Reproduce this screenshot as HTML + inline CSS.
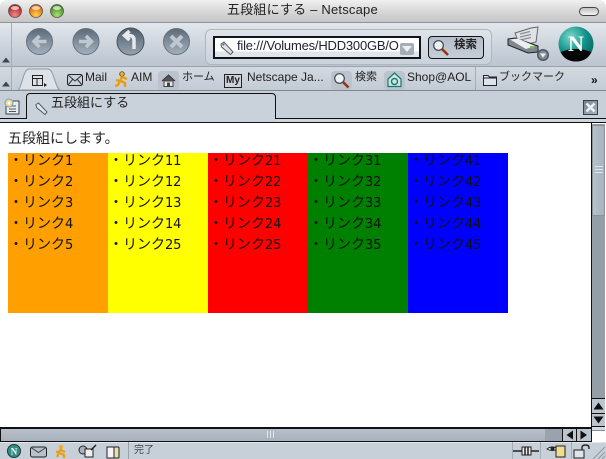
<!DOCTYPE html>
<html><head><meta charset="utf-8"><style>
html,body{margin:0;padding:0;background:#fff}
#w{position:relative;width:606px;height:459px;overflow:hidden;background:#fff;font-family:"Liberation Sans","Noto Sans CJK JP",sans-serif;color:#000}
.a{position:absolute}
.t{position:absolute;white-space:nowrap;line-height:1}
.col{position:absolute;top:153px;width:100px;height:160px;overflow:hidden}
.col div{position:absolute;left:1px;white-space:nowrap;font-family:"Noto Sans CJK JP",sans-serif;font-size:14px;line-height:21px;height:21px;color:#111}
.col b{font-family:"DejaVu Sans",sans-serif;font-weight:normal;font-size:13px;letter-spacing:-.2px}
.tb{font-size:12px;color:#222}
.j{font-size:11px;font-family:"Noto Sans CJK JP",sans-serif}
svg{position:absolute;overflow:visible}
</style></head><body><div id="w">
<!-- title bar -->
<div class="a" style="left:0;top:0;width:606px;height:23px;background:linear-gradient(#f0f0f0,#d8d8d8 50%,#c6c6c6);border-radius:7px 7px 0 0;border-bottom:1px solid #8f959c;box-sizing:border-box"></div>
<svg style="left:0;top:0" width="70" height="22">
<defs>
<radialGradient id="r" cx=".5" cy=".8" r=".7"><stop offset="0" stop-color="#f08a88"/><stop offset="1" stop-color="#b4201e"/></radialGradient>
<radialGradient id="o" cx=".5" cy=".8" r=".7"><stop offset="0" stop-color="#ffd24a"/><stop offset="1" stop-color="#d8620a"/></radialGradient>
<radialGradient id="g" cx=".5" cy=".8" r=".7"><stop offset="0" stop-color="#a8e070"/><stop offset="1" stop-color="#3c8a1c"/></radialGradient>
</defs>
<circle cx="15" cy="11" r="6.500" fill="url(#r)" stroke="#555" stroke-width=".8"/><ellipse cx="15" cy="8" rx="4" ry="2" fill="#fff" opacity=".65"/>
<circle cx="36" cy="11" r="6.500" fill="url(#o)" stroke="#555" stroke-width=".8"/><ellipse cx="36" cy="8" rx="4" ry="2" fill="#fff" opacity=".65"/>
<circle cx="57" cy="11" r="6.500" fill="url(#g)" stroke="#555" stroke-width=".8"/><ellipse cx="57" cy="8" rx="4" ry="2" fill="#fff" opacity=".65"/>
</svg>
<div class="t" style="left:227px;top:3px;font-size:13px;color:#222;letter-spacing:.2px">五段組にする – Netscape</div>
<div class="a" style="left:579px;top:7px;width:18px;height:7px;border:1px solid #444;border-radius:5px;background:linear-gradient(#c0c0c0,#f4f4f4)"></div>

<!-- nav toolbar -->
<div class="a" style="left:0;top:23px;width:606px;height:44px;background:linear-gradient(#e3e7ec,#c9d1da 60%,#bcc5d0);border-bottom:1px solid #9aa3ad;box-sizing:border-box"></div>
<div class="a" style="left:0;top:23px;width:12px;height:44px;border-right:1px solid #a5adb7;box-sizing:border-box"></div>
<svg style="left:2px;top:57px" width="9" height="6"><path d="M0 5.500L4 .5L8 5.500Z" fill="#3c4650"/></svg>
<svg style="left:0;top:22px" width="210" height="45">
<defs><linearGradient id="b" x1="0" y1="0" x2="0" y2="1"><stop offset="0" stop-color="#5c6a78"/><stop offset="1" stop-color="#a5b1bd"/></linearGradient>
<linearGradient id="b2" x1="0" y1="0" x2="0" y2="1"><stop offset="0" stop-color="#4f5c69"/><stop offset="1" stop-color="#97a3b0"/></linearGradient></defs>
<g stroke="#66727e" stroke-width="1">
<circle cx="39.500" cy="19.500" r="13" fill="url(#b)"/><circle cx="86" cy="19.500" r="13" fill="url(#b)"/><circle cx="130.500" cy="19.500" r="13.500" fill="url(#b2)" stroke="#48535e"/><circle cx="176.500" cy="19.500" r="13" fill="url(#b)"/></g>
<path d="M46.500 19.500H34.500M39.500 14L34 19.500L39.500 25" fill="none" stroke="#bfc8d1" stroke-width="3.500"/>
<path d="M79 19.500H91M86 14L91.500 19.500L86 25" fill="none" stroke="#bfc8d1" stroke-width="3.500"/>
<path d="M134 27V18Q134 13.500 129 13.500H126M129.500 9L124.500 13.500L129.500 18" fill="none" stroke="#e6eaef" stroke-width="3.500"/>
<path d="M171 14L182 25M182 14L171 25" fill="none" stroke="#bfc8d1" stroke-width="4"/>
</svg>
<!-- URL group -->
<div class="a" style="left:205px;top:29px;width:287px;height:36px;border:1px solid #aeb7c1;border-radius:6px;box-sizing:border-box;background:linear-gradient(#dfe4e9,#c9d1da)"></div>
<div class="a" style="left:213px;top:36px;width:208px;height:23px;border:2px solid #10151b;box-sizing:border-box;background:linear-gradient(#fff 70%,#dfe5ea 70%)"></div>
<svg style="left:219px;top:41px" width="16" height="14"><path d="M2 3L5 1L14 11L11.500 13.500L2.500 6Z" fill="#dfe4ea" stroke="#4f5963"/><circle cx="4.500" cy="3.500" r="1" fill="#4f5963"/></svg>
<div class="t" style="left:237px;top:39px;font-size:13px;color:#223;letter-spacing:-.2px;width:163px;overflow:hidden">file:///Volumes/HDD300GB/O</div>
<div class="a" style="left:400px;top:43px;width:14px;height:12px;background:#a4adb8;border-radius:2px"></div>
<svg style="left:402px;top:46px" width="10" height="6"><path d="M0 0H10L5 6Z" fill="#eef1f4"/></svg>
<div class="a" style="left:428px;top:36px;width:56px;height:23px;border:1px solid #10151b;border-radius:4px;box-sizing:border-box;background:linear-gradient(#b4bdc8,#c6ced8)"></div>
<svg style="left:432px;top:39px" width="18" height="18"><circle cx="6.500" cy="6.500" r="4.800" fill="#eef2f5" stroke="#3c4650" stroke-width="1.200"/><path d="M10 10L16 16" stroke="#9a3312" stroke-width="2.600"/></svg>
<div class="t" style="left:454px;top:40px;font-size:11.500px;font-weight:bold;color:#222">検索</div>
<!-- printer -->
<svg style="left:505px;top:25px" width="46" height="36">
<path d="M10 8L26 3L33 2L31 17L15 21Z" fill="#dfe2e6" stroke="#666"/>
<path d="M15 9L25 6.500M15 12L26 9.500M15 15L26 12.500" stroke="#8b9096" stroke-width="1.200"/>
<path d="M3 14L10 13L33 21V27L23 28L3 20Z" fill="#7f8891" stroke="#1d2328"/>
<path d="M5 14.500L13 13.500L30 21L21 24Z" fill="#eceef1"/>
<rect x="25" y="21" width="4" height="2.500" fill="#7bc142"/>
<circle cx="38" cy="30" r="6" fill="#4c5660"/><circle cx="38" cy="30" r="4.500" fill="#838d97"/><path d="M35 28.500H41L38 32.500Z" fill="#f2f4f6"/>
</svg>
<!-- N logo -->
<svg style="left:558px;top:24px" width="40" height="40">
<defs><radialGradient id="n" cx=".35" cy=".3" r=".8"><stop offset="0" stop-color="#78d8c8"/><stop offset=".55" stop-color="#12928a"/><stop offset="1" stop-color="#06605a"/></radialGradient></defs>
<circle cx="18" cy="20" r="17.500" fill="url(#n)"/>
<path d="M2.500 28Q18 22 33.500 28Q29 37.500 18 37.500Q7 37.500 2.500 28Z" fill="#060606"/>
<text x="18" y="27" font-family="Liberation Serif,serif" font-size="22" font-weight="bold" fill="#fff" text-anchor="middle">N</text>
</svg>

<!-- personal toolbar -->
<div class="a" style="left:0;top:67px;width:606px;height:24px;background:linear-gradient(#d3d9e0,#c3cbd5);border-bottom:1px solid #7f8791;box-sizing:border-box"></div>
<div class="a" style="left:0;top:67px;width:12px;height:23px;border-right:1px solid #a5adb7;box-sizing:border-box"></div>
<svg style="left:2px;top:81px" width="9" height="6"><path d="M0 5.500L4 .5L8 5.500Z" fill="#3c4650"/></svg>
<svg style="left:18px;top:68px" width="44" height="23"><path d="M0 22C4 20 5 1 11 1H30C36 1 37 20 42 22Z" fill="#dde2e8" stroke="#8f98a2"/></svg>
<svg style="left:31px;top:74px" width="16" height="14"><path d="M1.500 1.500H11.500V11.500H1.500ZM1.500 4.500H11.500M6 4.500V11.500" fill="none" stroke="#222"/><path d="M13 9L16 11L13 13Z" fill="#222"/></svg>
<svg style="left:67px;top:74px" width="17" height="13"><rect x=".5" y=".5" width="15" height="11" rx="2" fill="#c9d2dc" stroke="#222"/><path d="M1 1L8 7L15 1M1 11L6 5M15 11L10 5" fill="none" stroke="#333"/></svg>
<div class="t tb" style="left:85px;top:71px">Mail</div>
<svg style="left:114px;top:71px" width="16" height="17"><circle cx="8" cy="3" r="2.300" fill="#f3ac1c" stroke="#333" stroke-width=".7"/><path d="M8 5.500L6 10L2 9M8 6L13 8M7 10L11 12L11 16M6 10L4 14L1 15" fill="none" stroke="#e99e12" stroke-width="2.400"/></svg>
<div class="t tb" style="left:131px;top:71px">AIM</div>
<div class="a" style="left:158px;top:71px;width:21px;height:19px;background:#bac3ce;border-radius:4px"></div>
<svg style="left:161px;top:74px" width="15" height="13"><path d="M1 7L7.500 1L14 7" fill="#555" stroke="#333"/><rect x="3" y="7" width="9" height="5.500" fill="#e6eaee" stroke="#444"/><rect x="6" y="8.500" width="3" height="4" fill="#444"/></svg>
<div class="t tb j" style="left:182px;top:71px">ホーム</div>
<div class="a" style="left:224px;top:74px;width:16px;height:12px;border:1px solid #222;font:bold 10px/12px 'Liberation Sans',sans-serif;text-align:center;color:#222;background:#ccd3dc">My</div>
<div class="t tb" style="left:247px;top:71px">Netscape Ja...</div>
<div class="a" style="left:331px;top:71px;width:21px;height:19px;background:#bac3ce;border-radius:4px"></div>
<svg style="left:333px;top:72px" width="18" height="17"><circle cx="6.500" cy="6.500" r="4.800" fill="#eef2f5" stroke="#3c4650" stroke-width="1.200"/><path d="M10 10L15.500 15.500" stroke="#9a3312" stroke-width="2.600"/></svg>
<div class="t tb j" style="left:355px;top:71px">検索</div>
<div class="a" style="left:384px;top:71px;width:21px;height:19px;background:#bac3ce;border-radius:4px"></div>
<svg style="left:387px;top:72px" width="15" height="16"><path d="M1 7L7.500 1L14 7V14.500H1Z" fill="#cfe6e0" stroke="#157a6c" stroke-width="1.200"/><circle cx="7.500" cy="9.500" r="3" fill="none" stroke="#157a6c" stroke-width="1.400"/></svg>
<div class="t tb" style="left:407px;top:71px">Shop@AOL</div>
<div class="a" style="left:475px;top:67px;width:1px;height:23px;background:#a5adb7"></div>
<svg style="left:483px;top:74px" width="15" height="12"><path d="M.5 11.500V1.500H5L6.500 3H13.500V11.500ZM.5 4H13.500" fill="#dfe4ea" stroke="#223"/></svg>
<div class="t tb j" style="left:499px;top:71px">ブックマーク</div>
<div class="t" style="left:591px;top:74px;font-size:12px;font-weight:bold;color:#111">»</div>

<!-- tab bar -->
<div class="a" style="left:0;top:91px;width:606px;height:28px;background:#c7cfd9;border-bottom:1px solid #111;box-sizing:border-box"></div>
<div class="a" style="left:26px;top:93px;width:250px;height:26px;background:#c9d1db;border:1px solid #111;border-bottom:0;border-radius:4px 4px 0 0;box-sizing:border-box"></div>
<svg style="left:3px;top:98px" width="18" height="18"><rect x="3" y="3" width="13" height="13" fill="#e8ecef" stroke="#39424c"/><path d="M6 8H13M6 11H13M6 13.500H13" stroke="#555"/><circle cx="6" cy="5" r="4" fill="#f2d98a" stroke="#7aa0c4"/><circle cx="6" cy="5" r="1.500" fill="#fff"/></svg>
<svg style="left:34px;top:102px" width="14" height="14"><path d="M2 2.500L4.500 1L13 10L11 12.500L2.500 5.500Z" fill="#dfe4ea" stroke="#4f5963"/></svg>
<div class="t" style="left:51px;top:96px;font-size:13px;color:#222">五段組にする</div>
<div class="a" style="left:583px;top:100px;width:15px;height:15px;background:linear-gradient(135deg,#78838f,#a9b3be);border:1px solid #39424c;box-sizing:border-box"></div>
<svg style="left:585px;top:102px" width="11" height="11"><path d="M1.500 1.500L9.500 9.500M9.500 1.500L1.500 9.500" stroke="#eef1f4" stroke-width="2.600"/></svg>
<div class="a" style="left:0;top:119px;width:606px;height:3px;background:#cdd4dd"></div>
<div class="a" style="left:0;top:122px;width:606px;height:1px;background:#111"></div>
<div class="a" style="left:27px;top:118px;width:248px;height:4px;background:#c9d1db"></div>

<!-- content -->
<div class="t" style="left:8px;top:131px;font-size:14px;color:#222;font-family:'Noto Sans CJK JP',sans-serif">五段組にします。</div>
<div class="col" style="left:8px;background:#ffa000"><div style="top:-3px">・リンク<b>1</b></div><div style="top:18px">・リンク<b>2</b></div><div style="top:39px">・リンク<b>3</b></div><div style="top:60px">・リンク<b>4</b></div><div style="top:81px">・リンク<b>5</b></div></div>
<div class="col" style="left:108px;background:#ffff00"><div style="top:-3px">・リンク<b>11</b></div><div style="top:18px">・リンク<b>12</b></div><div style="top:39px">・リンク<b>13</b></div><div style="top:60px">・リンク<b>14</b></div><div style="top:81px">・リンク<b>25</b></div></div>
<div class="col" style="left:208px;background:#ff0000"><div style="top:-3px">・リンク<b>21</b></div><div style="top:18px">・リンク<b>22</b></div><div style="top:39px">・リンク<b>23</b></div><div style="top:60px">・リンク<b>24</b></div><div style="top:81px">・リンク<b>25</b></div></div>
<div class="col" style="left:308px;background:#008000"><div style="top:-3px">・リンク<b>31</b></div><div style="top:18px">・リンク<b>32</b></div><div style="top:39px">・リンク<b>33</b></div><div style="top:60px">・リンク<b>34</b></div><div style="top:81px">・リンク<b>35</b></div></div>
<div class="col" style="left:408px;background:#0000ff"><div style="top:-3px">・リンク<b>41</b></div><div style="top:18px">・リンク<b>42</b></div><div style="top:39px">・リンク<b>43</b></div><div style="top:60px">・リンク<b>44</b></div><div style="top:81px">・リンク<b>45</b></div></div>

<!-- vertical scrollbar -->
<div class="a" style="left:591px;top:123px;width:1px;height:304px;background:#111"></div>
<div class="a" style="left:592px;top:124px;width:13px;height:274px;background:#959da6"></div>
<div class="a" style="left:592px;top:125px;width:13px;height:91px;background:linear-gradient(90deg,#b8c0ca,#aab3bd);border:1px solid #8a939d;box-sizing:border-box"></div>
<div class="a" style="left:595px;top:166px;width:8px;height:1px;background:#e0e5ea;box-shadow:0 3px #e0e5ea,0 6px #e0e5ea"></div>
<div class="a" style="left:592px;top:398px;width:13px;height:15px;background:#bcc4ce;border-top:1px solid #111;box-sizing:border-box"></div>
<svg style="left:593px;top:402px" width="11" height="8"><path d="M.5 7.500L5.500 .5L10.500 7.500Z" fill="#111"/></svg>
<div class="a" style="left:592px;top:413px;width:13px;height:14px;background:#bcc4ce;border-top:1px solid #111;border-bottom:1px solid #111;box-sizing:border-box"></div>
<svg style="left:593px;top:416px" width="11" height="8"><path d="M.5 .5L5.500 7.500L10.500 .5Z" fill="#111"/></svg>
<div class="a" style="left:592px;top:427px;width:13px;height:4px;background:#d3d9e0;border-bottom:1px solid #8a939d;box-sizing:border-box"></div>

<!-- horizontal scrollbar -->
<div class="a" style="left:0;top:427px;width:592px;height:15px;background:#111"></div>
<div class="a" style="left:1px;top:429px;width:544px;height:12px;background:linear-gradient(#b8c0ca,#a8b1bb)"></div>
<div class="a" style="left:267px;top:431px;width:1px;height:7px;background:#e0e5ea;box-shadow:3px 0 #e0e5ea,6px 0 #e0e5ea"></div>
<div class="a" style="left:545px;top:429px;width:17px;height:12px;background:#9aa3ad"></div>
<div class="a" style="left:563px;top:429px;width:13px;height:12px;background:#bcc4ce"></div>
<svg style="left:566px;top:430px" width="8" height="10"><path d="M7 .5L.5 5L7 9.500Z" fill="#111"/></svg>
<div class="a" style="left:577px;top:429px;width:14px;height:12px;background:#bcc4ce"></div>
<svg style="left:580px;top:430px" width="8" height="10"><path d="M.5 .5L7 5L.5 9.500Z" fill="#111"/></svg>

<!-- status bar -->
<div class="a" style="left:0;top:442px;width:606px;height:17px;background:#c7cfd9;border-top:1px solid #e4e8ec;box-sizing:border-box"></div>
<div class="a" style="left:128px;top:442px;width:1px;height:17px;background:#9aa3ad"></div>
<div class="a" style="left:512px;top:442px;width:1px;height:17px;background:#a5adb7"></div>
<div class="a" style="left:540px;top:442px;width:1px;height:17px;background:#a5adb7"></div>
<div class="a" style="left:571px;top:442px;width:1px;height:17px;background:#a5adb7"></div>
<svg style="left:0;top:442px" width="128" height="17">
<circle cx="14" cy="9" r="6.500" fill="#2f8f86" stroke="#333"/><text x="14" y="12.500" font-size="9" font-weight="bold" font-family="Liberation Serif,serif" fill="#fff" text-anchor="middle">N</text>
<rect x="30.500" y="5" width="16" height="10" rx="2" fill="#b9c2cc" stroke="#222"/><path d="M31 5.500L38.500 10.500L46 5.500" fill="none" stroke="#444"/>
<circle cx="61" cy="5" r="2" fill="#f3ac1c"/><path d="M61 7L59 10L56 10M61 8L65 10M60 11L64 13L64 16M59 11L57 15" fill="none" stroke="#e99e12" stroke-width="2.200"/>
<circle cx="83" cy="8" r="4" fill="#a9b3be" stroke="#222"/><rect x="85" y="7" width="8" height="8" fill="#eee" stroke="#222"/><path d="M91 8L96 3" stroke="#222" stroke-width="1.500"/>
<rect x="107" y="5" width="12" height="11" rx="1" fill="#e6dfae" stroke="#222"/><rect x="107" y="5" width="7" height="11" fill="#f4f4f4" stroke="#222"/>
</svg>
<div class="t" style="left:134px;top:444px;font-size:10px;color:#444;font-family:'Noto Sans CJK JP',sans-serif">完了</div>
<svg style="left:512px;top:444px" width="94" height="15">
<path d="M1 7H10M19 7H27" stroke="#222" stroke-width="1.500"/><rect x="10" y="3" width="9" height="8" fill="#e8ecef" stroke="#222"/><path d="M13 3V11M16 3V11" stroke="#222" stroke-width="1.500"/>
<path d="M35 5Q40 1 46 5Q40 8 35 5Z" fill="#fff" stroke="#222"/><circle cx="40.500" cy="4.500" r="2" fill="#222"/><rect x="44" y="2" width="9" height="11" fill="#f0dd8e" stroke="#222"/>
<rect x="62" y="6" width="10" height="8" fill="#dfe4ea" stroke="#222"/><path d="M70 6V3.500Q70 1 73.500 1Q77 1 77 3.500V5" fill="none" stroke="#222" stroke-width="1.400"/>
<path d="M81 15L93 3M86 15L93 8M90 15L93 12" stroke="#8f98a2"/>
</svg>
</div></body></html>
